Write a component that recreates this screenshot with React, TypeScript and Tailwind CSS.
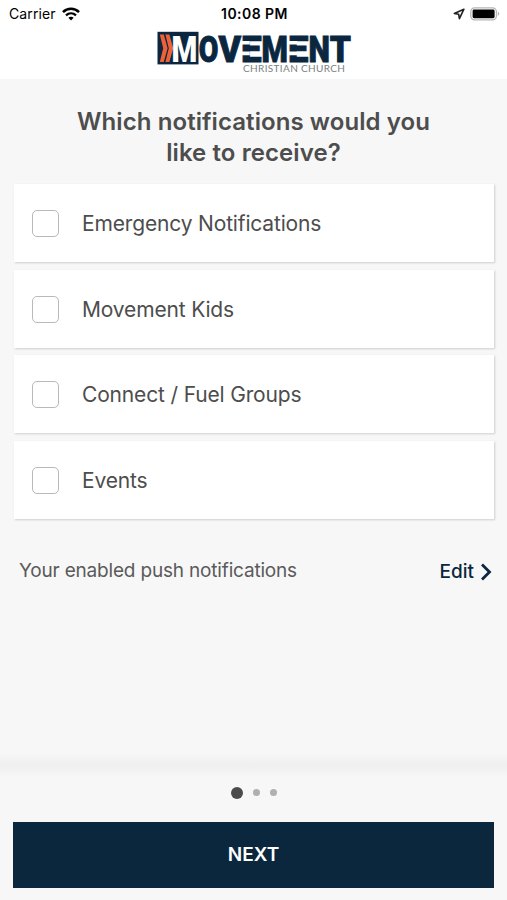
import { useState } from "react";

const TOPICS = [
  "Emergency Notifications",
  "Movement Kids",
  "Connect / Fuel Groups",
  "Events",
];

// each letter of the wordmark has its own width
const WORDMARK = [
  { char: "O", x: 198.8, width: 19.6 },
  { char: "V", x: 218.4, width: 22.6 },
  { char: "E", x: 241, width: 20.6 },
  { char: "M", x: 261.6, width: 26.4 },
  { char: "E", x: 288, width: 20.4 },
  { char: "N", x: 308.4, width: 21.4 },
  { char: "T", x: 329.8, width: 21.2 },
];

function StatusBar() {
  return (
    <div className="grid h-7 grid-cols-3 items-center pl-[9px] pr-[7px] text-black">
      <div className="flex items-center gap-[6px]">
        <span className="text-[14px] leading-[28px] tracking-[0.1px]">Carrier</span>
        <svg width="18" height="14" viewBox="0 0 18 14" fill="none" stroke="black">
          <path d="M1 5.2C5.4.7 12.6.7 17 5.2" strokeWidth="2.5" />
          <path d="M4 8.4c2.9-2.7 7.1-2.7 10 0" strokeWidth="2.3" />
          <path d="M6.4 10.8c1.5-1.4 3.7-1.4 5.2 0L9 13.5z" fill="black" stroke="none" />
        </svg>
      </div>
      <p className="text-center text-[14px] font-semibold leading-[28px] tracking-[0.45px]">
        10:08 PM
      </p>
      <div className="flex items-center justify-end gap-[5px]">
        <svg width="12" height="12" viewBox="0 0 12 12" fill="none" stroke="#222">
          <path d="M10.9 1.2 1.3 5.5l4.4.8.7 4.4z" strokeWidth="1.6" strokeLinejoin="round" />
        </svg>
        <svg width="30" height="14" viewBox="0 0 30 14">
          <rect x=".8" y=".8" width="25.6" height="12" rx="3.8" fill="white" stroke="#b5b5b5" strokeWidth="1.3" />
          <rect x="2.6" y="2.5" width="22" height="8.7" rx="1.4" fill="black" />
          <path d="M27.8 4.6c2 .9 2 3.6 0 4.4z" fill="#b5b5b5" />
        </svg>
      </div>
    </div>
  );
}

function Logo() {
  return (
    <svg width="196" height="45" viewBox="156 31 196 45" className="overflow-visible">
      <rect x="157.5" y="31.8" width="41" height="32.6" fill="#0b273f" />
      <path d="M159.8 34.5h4l3.8 13.7-3.8 13.7h-4l3.4-13.7z" fill="#ee6136" />
      <path d="M165.4 34.5h4l3.8 13.7-3.8 13.7h-4l3.4-13.7z" fill="#ee6136" />
      <text
        x="171.5"
        y="61.6"
        textLength="25.8"
        lengthAdjust="spacingAndGlyphs"
        className="fill-white font-['Roboto',sans-serif] text-[37px] font-black"
      >
        M
      </text>
      {WORDMARK.map(({ char, x, width }) => (
        <text
          key={x}
          x={x}
          y="61.5"
          textLength={width}
          lengthAdjust="spacingAndGlyphs"
          strokeWidth="0.9"
          className="fill-[#0b273f] stroke-[#0b273f] font-['Roboto',sans-serif] text-[37px] font-black"
        >
          {char}
        </text>
      ))}
      {/* gaps that split the stems of the E's */}
      <path d="M240.8 41h9v3.4h-9zM240.8 51.4h9v3.8h-9zM288.4 41h9v3.4h-9zM288.4 51.4h9v3.8h-9z" fill="white" />
      <text
        x="243"
        y="72.4"
        textLength="102"
        lengthAdjust="spacing"
        className="fill-[#7d7f82] font-['Lato',sans-serif] text-[10px]"
      >
        CHRISTIAN CHURCH
      </text>
    </svg>
  );
}

function TopicRow({ label }: { label: string }) {
  const [checked, setChecked] = useState(false);
  return (
    <label className="flex h-[78px] cursor-pointer items-center gap-6 bg-white pl-[18px] pt-px shadow-[1px_1px_2px_rgba(0,0,0,0.17)]">
      <input
        type="checkbox"
        checked={checked}
        onChange={() => setChecked(!checked)}
        className="size-[27px] appearance-none rounded-[5px] border-[1.5px] border-[#b9b9b9] bg-white checked:bg-[#0b273f]"
      />
      <span className="-ml-px pt-px text-[21px] tracking-[-0.16px] text-[#4d4d4d]">{label}</span>
    </label>
  );
}

export default function App() {
  return (
    <main className="flex h-[900px] w-[507px] flex-col bg-[#f7f7f7] font-['Inter',sans-serif]">
      <header className="h-[79px] bg-white">
        <StatusBar />
        <div className="flex justify-center pt-[3px]">
          <Logo />
        </div>
      </header>

      <section className="flex-1 px-[14px] pt-[27px]">
        <h1 className="text-center text-[24px] font-semibold leading-[31px] tracking-[0.08px] text-[#4d4d4d]">
          Which notifications would you
          <br />
          like to receive?
        </h1>
        <div className="mr-[-1px] mt-4 flex flex-col gap-[7.5px]">
          {TOPICS.map((topic) => (
            <TopicRow key={topic} label={topic} />
          ))}
        </div>
        <div className="mt-[38px] flex items-center justify-between pl-[5px] pr-px">
          <p className="text-[19px] tracking-[-0.18px] text-[#5a5a5a]">Your enabled push notifications</p>
          <button className="flex items-center gap-[6px] pt-px text-[19px] font-medium text-[#0b273f]">
            Edit
            <svg width="12" height="18" viewBox="0 0 12 18" fill="none">
              <path d="m2 1.5 7.5 7.5L2 16.5" stroke="currentColor" strokeWidth="2.8" />
            </svg>
          </button>
        </div>
      </section>

      <footer>
        <div className="h-6 bg-linear-to-b from-[#f7f7f7] via-[#efefef] to-[#f7f7f7]" />
        <div className="flex h-[45px] items-center justify-center gap-[10px] pb-[14px]">
          <span className="size-3 rounded-full bg-[#4b4b4b]" />
          <span className="size-[7px] rounded-full bg-[#b0b0b0]" />
          <span className="size-[7px] rounded-full bg-[#b0b0b0]" />
        </div>
        <div className="px-[13px] pb-3">
          <button className="h-[66px] w-full bg-[#0b273d] text-[19px] font-semibold text-white">
            NEXT
          </button>
        </div>
      </footer>
    </main>
  );
}
